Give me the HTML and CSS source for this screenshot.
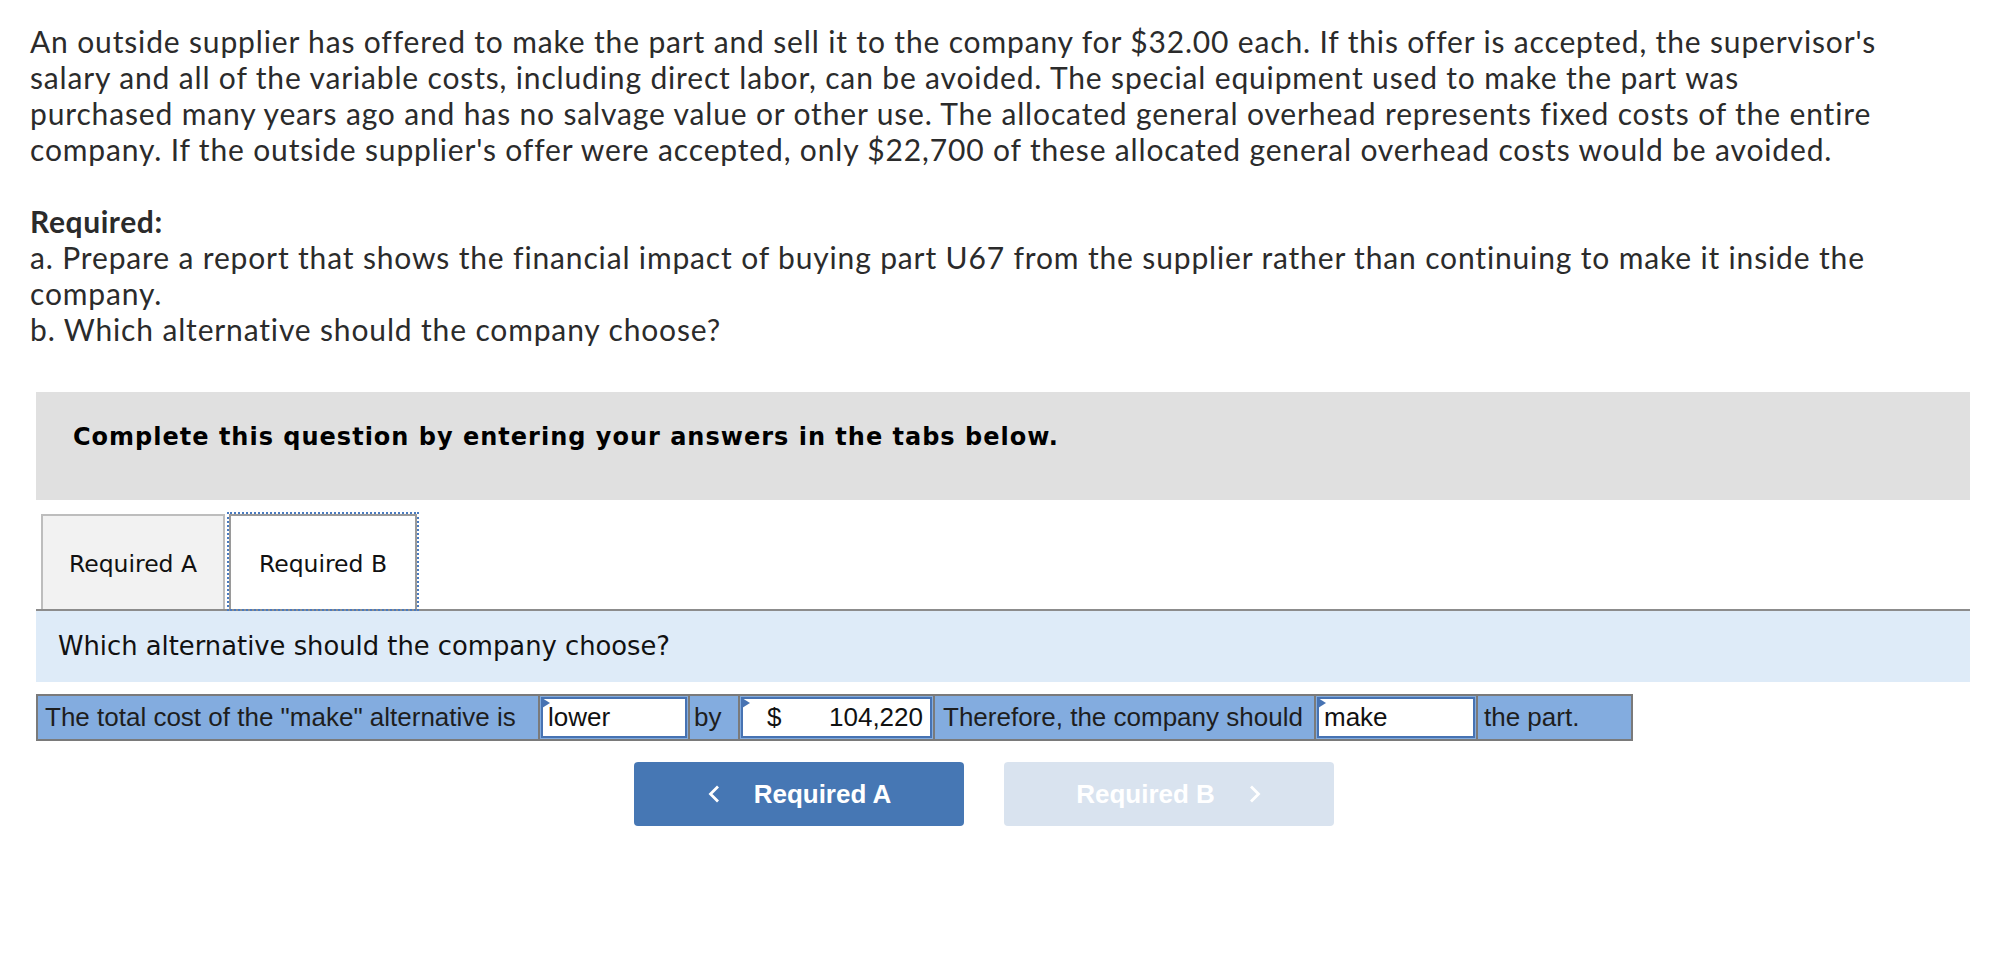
FILE: index.html
```html
<!DOCTYPE html>
<html lang="en">
<head>
<meta charset="utf-8">
<title>Make or Buy</title>
<link rel="stylesheet" href="styles.css">
</head>
<body>
<main class="page">
  <p class="intro">An outside supplier has offered to make the part and sell it to the company for $32.00 each. If this offer is accepted, the supervisor's<br>salary and all of the variable costs, including direct labor, can be avoided. The special equipment used to make the part was<br>purchased many years ago and has no salvage value or other use. The allocated general overhead represents fixed costs of the entire<br>company. If the outside supplier's offer were accepted, only $22,700 of these allocated general overhead costs would be avoided.</p>
  <p class="required"><strong>Required:</strong><br>a. Prepare a report that shows the financial impact of buying part U67 from the supplier rather than continuing to make it inside the<br>company.<br>b. Which alternative should the company choose?</p>

  <section class="quiz">
    <div class="banner">Complete this question by entering your answers in the tabs below.</div>
    <div class="tabs">
      <div class="tab">Required A</div>
      <div class="tab active">Required B</div>
    </div>
    <div class="prompt">Which alternative should the company choose?</div>
    <div class="answer-row">
      <div class="cell c-label">The total cost of the "make" alternative is</div>
      <div class="cell c-sel1"><div class="field"><span class="flag"></span>lower</div></div>
      <div class="cell c-by">by</div>
      <div class="cell c-amt"><div class="field money"><span class="flag"></span><span>$</span><span>104,220</span></div></div>
      <div class="cell c-there">Therefore, the company should</div>
      <div class="cell c-sel2"><div class="field"><span class="flag"></span>make</div></div>
      <div class="cell c-part">the part.</div>
    </div>
    <div class="nav">
      <button class="btn">
        <svg width="14" height="18" viewBox="0 0 14 18"><polyline points="11,1.5 3.5,9 11,16.5" fill="none" stroke="#fff" stroke-width="2.8"/></svg>
        <span>Required A</span>
      </button>
      <button class="btn disabled">
        <span>Required B</span>
        <svg width="14" height="18" viewBox="0 0 14 18"><polyline points="3,1.5 10.5,9 3,16.5" fill="none" stroke="#fff" stroke-width="2.8"/></svg>
      </button>
    </div>
  </section>
</main>
</body>
</html>
```

FILE: styles.css
```css
* { box-sizing: border-box; }
html, body { margin: 0; padding: 0; background: #fff; }
.page {
  padding: 23px 0 40px 30px;
  width: 1990px;
}
.intro, .required {
  margin: 0;
  font-family: Lato, "Open Sans", sans-serif;
  font-size: 30px;
  letter-spacing: 0.85px;
  line-height: 36px;
  color: #2b2b2b;
  white-space: nowrap;
}
.intro { margin-bottom: 36px; }
.required strong { font-weight: 700; letter-spacing: 0.6px; }

.quiz {
  margin: 45px 0 0 6px;
  width: 1934px;
}
.banner {
  height: 108px;
  padding: 31px 0 0 37px;
  background: #e0e0e0;
  font-family: "DejaVu Sans", Verdana, sans-serif;
  font-weight: bold;
  font-size: 24px;
  letter-spacing: 1px;
  color: #000;
}
.tabs {
  display: flex;
  align-items: flex-end;
  gap: 4px;
  margin-top: 14px;
  padding-left: 5px;
  border-bottom: 2px solid #8c8c8c;
  height: 97px;
}
.tab {
  width: 184px;
  height: 95px;
  display: flex;
  align-items: center;
  justify-content: center;
  background: #f2f2f2;
  border: 2px solid #bdbdbd;
  border-bottom: none;
  font-family: "DejaVu Sans", Verdana, sans-serif;
  font-size: 23.5px;
  color: #111;
  padding-top: 2px;
}
.tab.active {
  width: 188px;
  background: #fff;
  border-color: #9a9a9a;
  outline: 2px dotted #4a7bc0;
}
.prompt {
  height: 71px;
  padding: 20px 0 0 22px;
  background: #deebf8;
  font-family: "DejaVu Sans", Verdana, sans-serif;
  font-size: 25.8px;
  color: #111;
}
.answer-row {
  display: flex;
  width: 1597px;
  height: 47px;
  margin-top: 12px;
  border: 2px solid #7a7a7a;
  background: #83acdf;
  font-family: "Liberation Sans", Arial, sans-serif;
  font-size: 26px;
  color: #1e1e1e;
}
.cell {
  display: flex;
  align-items: center;
  white-space: nowrap;
  border-left: 2px solid #7a7a7a;
}
.cell:first-child { border-left: none; }
.c-label { width: 500px; padding-left: 7px; }
.c-sel1 { width: 150px; padding: 1px; }
.c-by { width: 50px; padding-left: 4px; }
.c-amt { width: 195px; padding: 1px; }
.c-there { width: 381px; padding-left: 8px; }
.c-sel2 { width: 162px; padding: 1px; }
.c-part { flex: 1; padding-left: 6px; }
.field {
  position: relative;
  flex: 1;
  height: 100%;
  display: flex;
  align-items: center;
  padding-left: 5px;
  background: #fff;
  border: 2px solid #4773b3;
  color: #111;
}
.field.money {
  justify-content: space-between;
  padding: 0 7px 0 24px;
}
.flag {
  position: absolute;
  left: -1px;
  top: -1px;
  width: 0;
  height: 0;
  border-left: 8px solid #4773b3;
  border-top: 5px solid transparent;
  border-bottom: 5px solid transparent;
}
.nav {
  display: flex;
  gap: 40px;
  margin-top: 21px;
  padding-left: 598px;
}
.btn {
  width: 330px;
  height: 64px;
  display: flex;
  align-items: center;
  justify-content: center;
  gap: 33px;
  border: none;
  border-radius: 4px;
  background: #4677b4;
  color: #fff;
  font-family: "Liberation Sans", Arial, sans-serif;
  font-weight: bold;
  font-size: 26px;
  padding: 0;
}
.btn.disabled {
  background: #d9e3ef;
}
```
